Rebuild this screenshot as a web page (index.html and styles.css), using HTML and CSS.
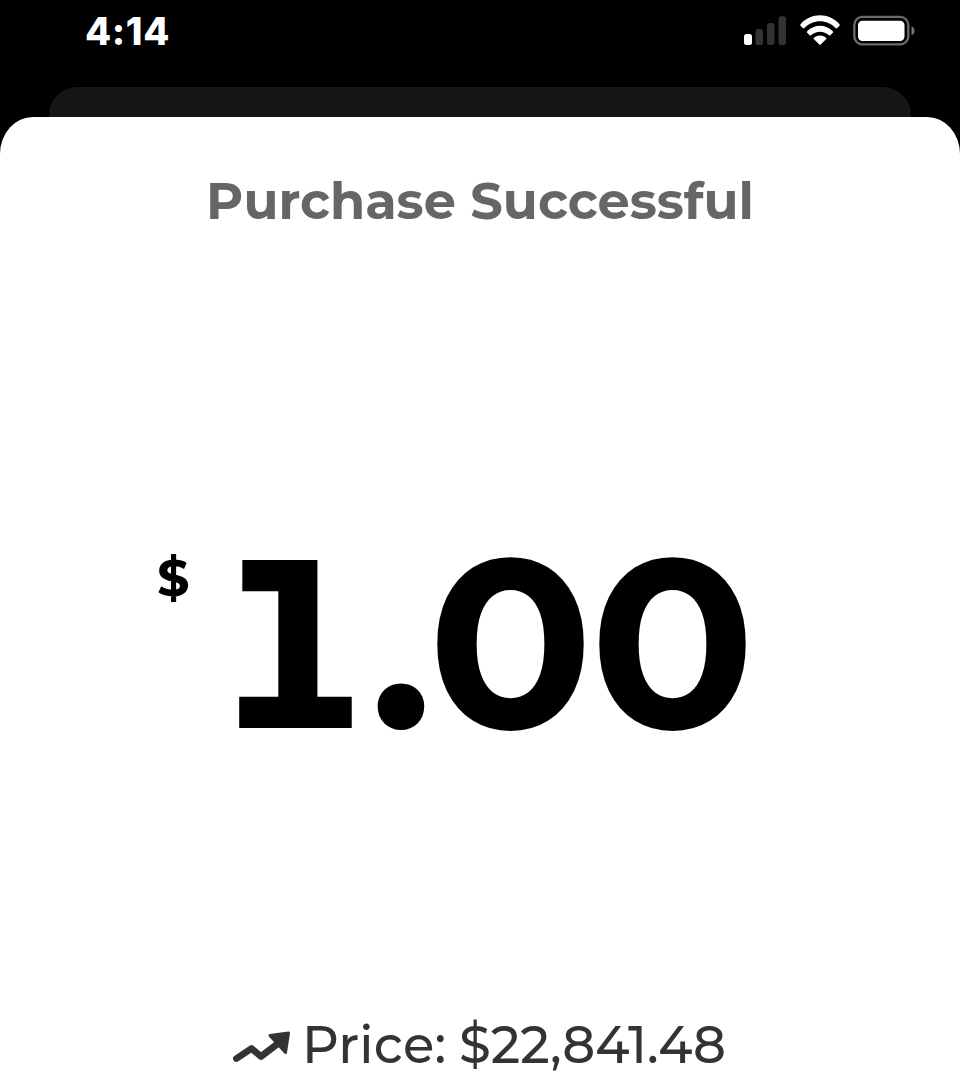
FILE: index.html
```html
<!DOCTYPE html>
<html lang="en">
<head>
    <meta charset="UTF-8">
    <meta name="viewport" content="width=device-width, initial-scale=1.0">
    <title>Purchase Successful</title>
    <link rel="stylesheet" href="styles.css">
</head>
<body>
    <!-- Status bar -->
    <header class="status-bar">
        <span class="time">4:14</span>
        <div class="status-icons">
            <svg class="signal" width="42" height="30" viewBox="0 0 42 30">
                <rect x="0" y="19" width="8" height="11" rx="2.5" fill="#fff"/>
                <rect x="11.5" y="14" width="7.5" height="16" rx="2.5" fill="#333"/>
                <rect x="23" y="8" width="7.5" height="22" rx="2.5" fill="#333"/>
                <rect x="34.5" y="1.3" width="7.5" height="28.7" rx="2.5" fill="#333"/>
            </svg>
            <svg class="wifi" width="40" height="30" viewBox="0 0 40 30" fill="#fff">
                <path d="M.5 9.2C11-2.7 29-2.7 39.5 9.2q.7.8 0 1.5l-2.3 2.3q-.8.8-1.6 0C27 3.9 13 3.9 4.4 13q-.8.8-1.6 0L.5 10.7q-.7-.7 0-1.5Z"/>
                <path d="M7.2 16.3C14.2 8.9 25.8 8.9 32.8 16.3q.8.8 0 1.5L30.4 20.2q-.7.7-1.5 0C24 15.5 16 15.5 11.1 20.2q-.8.7-1.5 0L7.2 17.8q-.8-.7 0-1.5Z"/>
                <path d="M14 22.8C17.5 19.8 22.5 19.8 26 22.8q.8.7 0 1.5L20.7 29.6q-.7.7-1.4 0L14 24.3q-.8-.8 0-1.5Z"/>
            </svg>
            <svg class="battery" width="62" height="31" viewBox="0 0 62 31">
                <rect x="1.3" y="1.9" width="54" height="27.4" rx="8" fill="none" stroke="#6b6b6b" stroke-width="2.3"/>
                <rect x="5" y="5.8" width="46.5" height="20.2" rx="4.5" fill="#fff"/>
                <path d="M58.5 11.2c4 1.5 4 7.5 0 9Z" fill="#777"/>
            </svg>
        </div>
    </header>

    <!-- Card peeking out behind the sheet -->
    <div class="back-card"></div>

    <main class="sheet">
        <h1>Purchase Successful</h1>

        <div class="amount">
            <span class="currency">$</span>
            <span class="value">1.00</span>
        </div>

        <div class="price">
            <svg class="trend" width="58" height="32" viewBox="0 0 58 32">
                <path d="M3.5 27.5 18.5 17.5 28 25.5 45 12.5" fill="none" stroke="#333" stroke-width="6.8" stroke-linecap="round" stroke-linejoin="round"/>
                <path d="M37 4.5 55.5 2 52.5 21.5Z" fill="#333" stroke="#333" stroke-width="3" stroke-linejoin="round"/>
            </svg>
            <span class="price-label">Price:</span>
            <span class="price-value">$22,841.48</span>
        </div>
    </main>
</body>
</html>
```

FILE: styles.css
```css
* {
    box-sizing: border-box;
}

body {
    margin: 0;
    height: 1089px;
    overflow: hidden;
    background: #000;
    font-family: 'Montserrat', 'Inter', sans-serif;
}

/* Status bar */
.status-bar {
    display: flex;
    justify-content: space-between;
    height: 87px;
    padding: 0 45px 0 85px;
    color: #fff;
}

.time {
    margin-top: 8px;
    font-family: 'Inter', sans-serif;
    font-size: 38px;
    font-weight: 800;
    line-height: 46px;
    letter-spacing: 0.6px;
}

.status-icons {
    display: flex;
    align-items: flex-start;
    margin-top: 15px;
}

.wifi {
    margin-left: 14px;
}

.battery {
    margin-left: 13px;
}

/* Cards */
.back-card {
    height: 30px;
    margin: 0 49px;
    background: #161618;
    border-radius: 28px 28px 0 0;
}

.sheet {
    height: 972px;
    background: #fff;
    border-radius: 33px 33px 0 0 / 37px 37px 0 0;
}

h1 {
    margin: 0;
    padding-top: 54px;
    color: #666;
    font-size: 51px;
    font-weight: 700;
    line-height: 60px;
    text-align: center;
    white-space: nowrap;
}

/* Amount */
.amount {
    display: flex;
    align-items: flex-start;
    height: 280px;
    margin-top: 271px;
    padding-left: 157px;
}

.currency {
    width: 50.5px;
    margin-top: 41px;
    font-size: 51px;
    font-weight: 700;
    line-height: 70px;
}

.value {
    font-size: 240px;
    font-weight: 700;
    line-height: 280px;
    letter-spacing: -6px;
    font-variant-numeric: tabular-nums;
    white-space: nowrap;
}

/* Price */
.price {
    display: flex;
    align-items: center;
    height: 60px;
    margin-top: 233px;
    padding-left: 233px;
    color: #333;
    font-size: 51.2px;
    font-weight: 500;
    line-height: 60px;
    white-space: nowrap;
}

.trend {
    margin-top: 4px;
}

.price-label {
    margin-left: 11px;
    letter-spacing: 0.3px;
}

.price-value {
    margin-left: 12.5px;
}
```
